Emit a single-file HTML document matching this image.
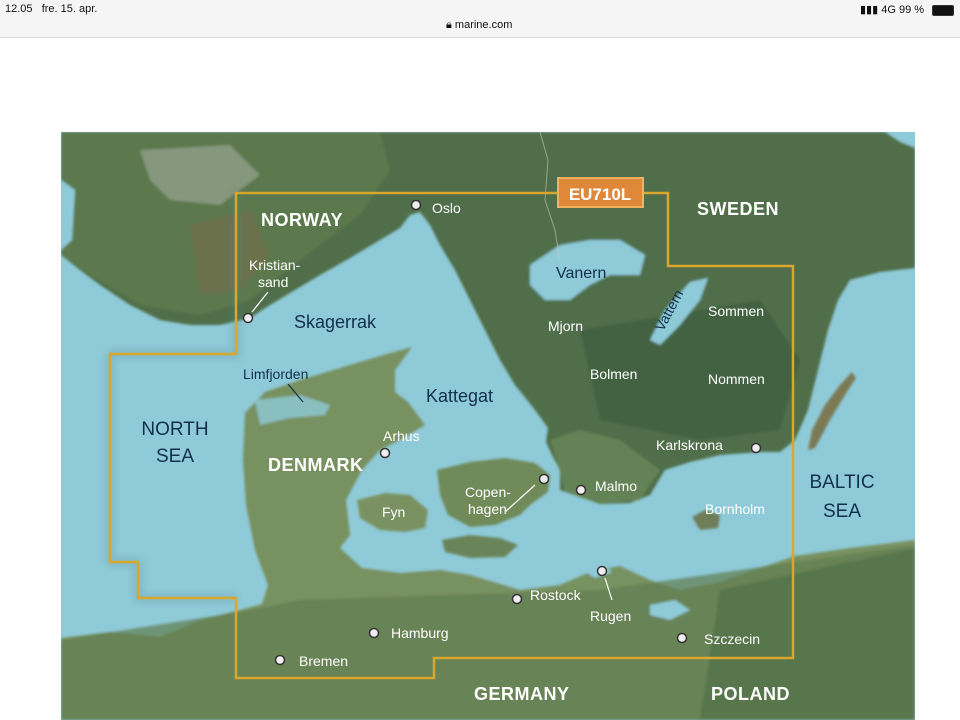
<!DOCTYPE html>
<html><head><meta charset="utf-8"><style>
html,body{margin:0;padding:0;width:960px;height:720px;overflow:hidden;background:#fff;font-family:"Liberation Sans",sans-serif}
.bar{position:absolute;left:0;top:0;width:960px;height:37px;background:#f5f5f5;border-bottom:1px solid #d8d8d8}
.t{position:absolute;font-size:11px;color:#111}
svg{position:absolute;left:0;top:0}
</style></head><body>
<div class="bar">
<div class="t" style="left:5px;top:3px">12.05&nbsp;&nbsp;&nbsp;fre. 15. apr.</div>
<div class="t" style="left:446px;top:19px">🔒︎ marine.com</div>
<div class="t" style="left:860px;top:3px">▮▮▮ 4G 99 %</div>
<div style="position:absolute;left:932px;top:5px;width:20px;height:9px;border:1px solid #333;border-radius:2px;background:#111"></div>
</div>
<svg width="960" height="720" viewBox="0 0 960 720">
<defs>
<filter id="b"><feGaussianBlur stdDeviation="1.2"/></filter>
<filter id="sh"><feGaussianBlur stdDeviation="4"/></filter>
<clipPath id="c"><rect x="61" y="132" width="854" height="588"/></clipPath>
</defs>
<g clip-path="url(#c)">
<rect x="61" y="132" width="854" height="588" fill="#8fcad8"/>
<g filter="url(#b)">
<path fill="#4f6e4a" d="M61,132 L885,132 L900,142 L915,148 L915,268 L880,272 L850,280 L838,300 L828,330 L818,370 L808,410 L795,440 L780,452 L760,452 L720,455 L690,462 L665,470 L650,495 L630,503 L600,504 L575,495 L560,490 L560,470 L552,455 L546,442 L548,428 L535,410 L515,385 L500,360 L485,330 L470,300 L455,270 L440,245 L430,225 L420,212 L410,215 L400,228 L380,240 L350,258 L320,275 L295,290 L270,305 L250,318 L220,325 L190,325 L160,320 L130,305 L100,285 L80,270 L61,255 Z"/>
<path fill="#5e7a4e" d="M61,132 L380,132 L390,170 L360,215 L300,260 L250,300 L200,315 L140,305 L90,275 L61,255 Z" opacity=".8"/>
<path fill="#a7b1a5" d="M140,150 L230,145 L260,175 L220,205 L170,200 L150,180 Z" opacity=".55"/>
<path fill="#7a6a4c" d="M190,225 L250,210 L270,255 L240,290 L200,295 Z" opacity=".5"/>
<path fill="#3c5a3e" d="M580,330 L760,300 L800,360 L780,430 L700,440 L600,420 Z" opacity=".6"/>
<path fill="#6d8a58" d="M550,440 L580,430 L620,440 L660,470 L640,500 L600,504 L565,492 L558,465 Z" opacity=".7"/>
<path fill="#8fcad8" d="M61,180 L75,190 L72,240 L61,250 Z"/>
<path fill="#8fcad8" d="M530,265 L560,245 L590,240 L620,240 L645,255 L640,275 L610,275 L590,285 L570,300 L545,300 L530,285 Z"/>
<path fill="#8fcad8" d="M650,340 L665,310 L690,282 L708,278 L700,300 L680,325 L660,345 Z"/>
<path fill="#7b7a55" d="M808,450 L812,430 L825,405 L840,385 L852,372 L856,378 L845,395 L830,420 L815,448 Z"/>
<path fill="#789161" d="M412,347 L395,370 L395,392 L408,402 L425,425 L400,440 L380,450 L362,470 L346,500 L350,535 L340,548 L362,568 L400,573 L440,570 L470,575 L520,590 L560,585 L590,572 L620,566 L650,580 L680,590 L720,582 L760,568 L795,556 L850,548 L915,540 L915,720 L61,720 L61,638 L110,632 L160,637 L200,620 L240,610 L262,604 L268,585 L255,550 L246,505 L243,460 L245,413 L265,392 L300,380 L340,368 L380,356 Z"/>
<path fill="#5f7d4f" d="M61,640 L240,612 L300,600 L600,590 L915,545 L915,720 L61,720 Z" opacity=".7"/>
<path fill="#4e6e46" d="M720,590 L915,548 L915,720 L700,720 Z" opacity=".6"/>
<path fill="#8fcad8" d="M255,400 L300,395 L330,405 L325,415 L290,418 L260,425 Z" opacity=".8"/>
<path fill="#7a9262" d="M357,500 L385,493 L410,495 L428,510 L425,528 L405,532 L380,530 L360,518 Z"/>
<path fill="#6f8a5a" d="M437,470 L470,462 L505,458 L535,463 L550,475 L548,492 L530,505 L520,515 L495,525 L470,527 L448,515 L440,495 Z"/>
<path fill="#6b845a" d="M442,540 L470,535 L500,538 L518,545 L505,557 L470,558 L445,552 Z"/>
<path fill="#6f7d5a" d="M692,517 L705,510 L720,515 L718,528 L700,530 Z"/>
<path fill="#8fcad8" d="M650,605 L675,600 L690,610 L670,620 L650,615 Z"/>
<path fill="#8fcad8" d="M575,565 L600,562 L612,572 L595,578 Z"/>
</g>
<path d="M540,132 L548,160 L545,200 L555,230 L560,262" stroke="#c8cdb8" stroke-width="1" fill="none" opacity=".6"/>
</g>
<path d="M110,354 L236,354 L236,193 M110,354 L110,562 L138,562 L138,598 L236,598" stroke="#5a8a90" stroke-width="8" fill="none" opacity=".3" filter="url(#sh)"/>
<path d="M236,193 L668,193 L668,266 L793,266 L793,658 L434,658 L434,678 L236,678 L236,598 L138,598 L138,562 L110,562 L110,354 L236,354 Z" stroke="#d9a62e" stroke-width="2.5" fill="none"/>
<rect x="558" y="178" width="85" height="29" fill="#e0883a" stroke="#f2b060" stroke-width="2"/>
<text x="600" y="200" text-anchor="middle" font-family="Liberation Sans" font-size="17" fill="#fff" font-weight="bold">EU710L</text>
<g font-family="Liberation Sans" fill="#fff">
<g font-size="18" font-weight="bold" letter-spacing=".5">
<text x="261" y="226">NORWAY</text>
<text x="697" y="215">SWEDEN</text>
<text x="268" y="471">DENMARK</text>
<text x="474" y="700">GERMANY</text>
<text x="711" y="700">POLAND</text>
</g>
<g font-size="14">
<text x="432" y="213">Oslo</text>
<text x="249" y="270">Kristian-</text>
<text x="258" y="287">sand</text>
<text x="548" y="331">Mjorn</text>
<text x="708" y="316">Sommen</text>
<text x="590" y="379">Bolmen</text>
<text x="708" y="384">Nommen</text>
<text x="656" y="450">Karlskrona</text>
<text x="383" y="441">Arhus</text>
<text x="595" y="491">Malmo</text>
<text x="465" y="497">Copen-</text>
<text x="468" y="514">hagen</text>
<text x="382" y="517">Fyn</text>
<text x="705" y="514">Bornholm</text>
<text x="530" y="600">Rostock</text>
<text x="590" y="621">Rugen</text>
<text x="704" y="644">Szczecin</text>
<text x="391" y="638">Hamburg</text>
<text x="299" y="666">Bremen</text>
</g>
</g>
<g font-family="Liberation Sans" fill="#13304a">
<text x="294" y="328" font-size="18">Skagerrak</text>
<text x="426" y="402" font-size="18">Kattegat</text>
<text x="556" y="278" font-size="16">Vanern</text>
<text x="663" y="332" font-size="14" transform="rotate(-62 663 332)">Vattern</text>
<text x="243" y="379" font-size="14">Limfjorden</text>
<g font-size="19" text-anchor="middle">
<text x="175" y="435">NORTH</text>
<text x="175" y="462">SEA</text>
<text x="842" y="488">BALTIC</text>
<text x="842" y="517">SEA</text>
</g>
</g>
<path d="M288,384 L303,402" stroke="#13304a" stroke-width="1.2"/>
<path d="M268,292 L252,312 M505,512 L535,485 M605,578 L612,600" stroke="#fff" stroke-width="1.2"/>
<g fill="#f0eef0" stroke="#333" stroke-width="1.5">
<circle cx="416" cy="205" r="4.5"/><circle cx="248" cy="318" r="4.5"/><circle cx="385" cy="453" r="4.5"/>
<circle cx="544" cy="479" r="4.5"/><circle cx="581" cy="490" r="4.5"/><circle cx="756" cy="448" r="4.5"/>
<circle cx="602" cy="571" r="4.5"/><circle cx="517" cy="599" r="4.5"/><circle cx="682" cy="638" r="4.5"/>
<circle cx="374" cy="633" r="4.5"/><circle cx="280" cy="660" r="4.5"/>
</g>
</svg>
</body></html>
